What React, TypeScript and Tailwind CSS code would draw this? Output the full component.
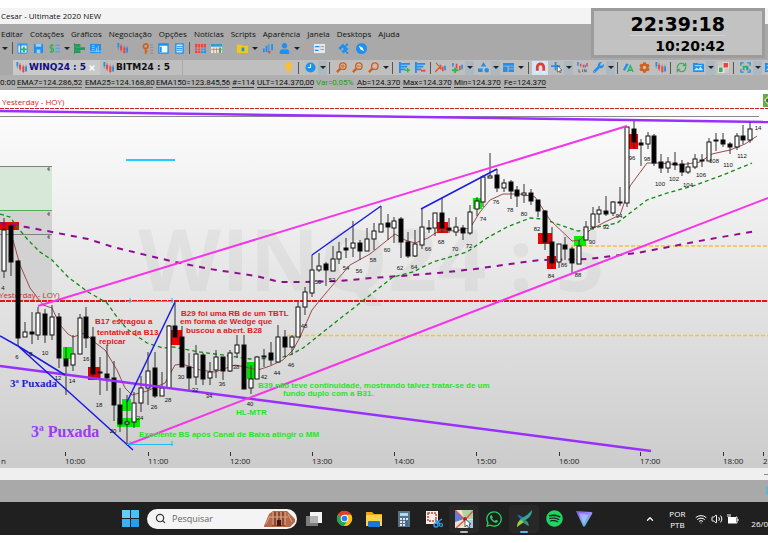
import { FC, ReactNode } from "react";
import {
  FaCog,
  FaLightbulb,
  FaPuzzlePiece,
  FaSpotify,
  FaUser,
  FaWhatsapp,
  FaWrench,
} from "react-icons/fa";
import { ChevronUp, RefreshCw, Search, Volume2, Wifi, X } from "lucide-react";

const BLUE = "#1e90f0";
const RED = "#e8473f";
const GREEN = "#2fb457";
const ORANGE = "#d2601a";

// x, high, top, bottom, low, filled
type Candle = [number, number, number, number, number, 0 | 1];

const candles: Candle[] = [
  [4, 218, 230, 271, 278, 0], [11, 224, 226, 262, 276, 1], [18, 260, 261, 338, 346, 1],
  [25, 322, 332, 337, 337, 0], [32, 312, 332, 334, 344, 1], [38, 307, 313, 335, 340, 0],
  [45, 309, 314, 335, 343, 1], [52, 305, 317, 335, 340, 0], [59, 313, 317, 358, 368, 1],
  [66, 347, 359, 366, 395, 1], [73, 335, 354, 365, 371, 0], [80, 314, 318, 354, 354, 0],
  [86, 307, 317, 338, 348, 1], [93, 327, 337, 374, 380, 1], [100, 357, 372, 373, 395, 1],
  [107, 345, 374, 378, 391, 1], [114, 361, 378, 405, 421, 1], [120, 388, 405, 424, 432, 1],
  [127, 395, 422, 424, 445, 0], [134, 392, 403, 422, 428, 0], [141, 376, 388, 403, 412, 0],
  [148, 352, 371, 388, 405, 0], [155, 352, 368, 396, 398, 1], [162, 372, 388, 396, 396, 0],
  [169, 325, 326, 388, 388, 0], [175, 303, 326, 337, 337, 1], [182, 326, 337, 367, 367, 1],
  [189, 353, 367, 378, 390, 1], [196, 345, 354, 377, 385, 0], [203, 353, 355, 379, 385, 1],
  [210, 362, 372, 378, 385, 0], [216, 350, 357, 370, 378, 0], [223, 357, 357, 371, 380, 1],
  [230, 350, 353, 371, 372, 0], [237, 335, 345, 353, 358, 0], [244, 335, 345, 389, 389, 1],
  [251, 365, 379, 388, 394, 0], [257, 356, 357, 379, 379, 0], [264, 349, 356, 357, 367, 0],
  [271, 342, 353, 360, 365, 1], [278, 325, 337, 362, 362, 0], [285, 330, 337, 347, 357, 1],
  [292, 335, 337, 347, 355, 0], [298, 302, 307, 337, 337, 0], [305, 287, 292, 307, 315, 0],
  [312, 255, 270, 293, 297, 0], [319, 253, 266, 270, 272, 0], [326, 262, 264, 270, 286, 1],
  [333, 246, 259, 271, 271, 0], [339, 242, 252, 259, 264, 0], [346, 238, 248, 250, 258, 1],
  [353, 221, 243, 248, 257, 0], [360, 240, 243, 251, 260, 1], [367, 228, 239, 251, 251, 0],
  [374, 223, 231, 239, 250, 0], [381, 206, 224, 232, 232, 0], [388, 214, 223, 227, 240, 1],
  [394, 217, 221, 228, 243, 0], [401, 217, 219, 242, 258, 1], [408, 232, 242, 256, 258, 1],
  [415, 230, 244, 256, 257, 0], [422, 209, 227, 245, 249, 0], [429, 220, 228, 229, 233, 1],
  [435, 213, 213, 228, 236, 0], [442, 198, 213, 228, 233, 1], [449, 218, 228, 230, 233, 1],
  [456, 217, 227, 232, 236, 0], [463, 225, 228, 233, 240, 1], [470, 205, 212, 233, 235, 0],
  [477, 197, 201, 209, 216, 0], [483, 175, 177, 202, 207, 0], [490, 153, 176, 178, 178, 0],
  [497, 169, 175, 188, 192, 1], [504, 179, 183, 188, 192, 0], [511, 180, 182, 191, 199, 1],
  [517, 186, 190, 196, 207, 1], [524, 184, 193, 195, 203, 0], [531, 189, 193, 201, 205, 1],
  [538, 200, 200, 211, 217, 1], [545, 210, 211, 242, 250, 1], [552, 227, 242, 263, 269, 1],
  [559, 244, 244, 262, 268, 0], [565, 237, 245, 249, 260, 1], [572, 247, 249, 263, 273, 1],
  [579, 240, 246, 264, 264, 0], [586, 221, 227, 240, 240, 0], [593, 207, 214, 227, 230, 0],
  [599, 206, 210, 214, 223, 0], [606, 196, 211, 214, 216, 1], [613, 201, 202, 213, 216, 0],
  [620, 187, 202, 203, 206, 1], [627, 127, 127, 203, 207, 0], [634, 121, 129, 142, 149, 1],
  [641, 139, 143, 145, 166, 1], [648, 132, 136, 144, 149, 0], [654, 134, 136, 163, 166, 1],
  [661, 154, 162, 168, 173, 1], [668, 157, 162, 168, 173, 0], [675, 152, 163, 165, 170, 1],
  [682, 160, 164, 172, 176, 1], [688, 162, 167, 172, 174, 0], [695, 154, 159, 167, 169, 0],
  [702, 154, 160, 161, 167, 1], [709, 138, 142, 161, 161, 0], [716, 133, 140, 141, 151, 0],
  [723, 133, 140, 144, 147, 1], [730, 142, 144, 147, 154, 1], [737, 133, 136, 147, 150, 0],
  [743, 125, 136, 140, 144, 1], [750, 122, 129, 140, 143, 0],
];

// x, y, width, height, colour
const boxes: [number, number, number, number, string][] = [
  [0, 222, 19, 8, "#f00000"],
  [63, 347, 9, 12, "#00f000"],
  [88, 367, 12, 13, "#e00000"],
  [122, 399, 9, 12, "#00f000"],
  [117, 418, 23, 9, "#00f000"],
  [171, 330, 11, 15, "#f00000"],
  [247, 362, 8, 17, "#00e000"],
  [437, 222, 11, 11, "#f00000"],
  [473, 198, 9, 11, "#00f000"],
  [538, 233, 14, 11, "#f00000"],
  [547, 256, 9, 13, "#f00000"],
  [574, 236, 12, 10, "#00f000"],
  [629, 134, 9, 15, "#f00000"],
];

// bar number, centre x, baseline y
const barNumbers: [string, number, number][] = [
  ["4", 3, 290], ["6", 17, 359], ["8", 31, 356], ["10", 45, 355], ["12", 58, 380],
  ["14", 72, 383], ["16", 86, 361], ["18", 99, 407], ["20", 113, 433], ["24", 140, 420],
  ["26", 154, 409], ["28", 168, 402], ["30", 181, 379], ["32", 195, 392], ["34", 209, 398],
  ["36", 222, 386], ["38", 236, 369], ["40", 250, 406], ["42", 264, 379], ["44", 277, 375],
  ["46", 291, 367], ["48", 304, 328], ["50", 318, 284], ["52", 332, 282], ["54", 346, 270],
  ["56", 359, 273], ["58", 373, 262], ["60", 387, 252], ["62", 400, 270], ["64", 414, 269],
  ["66", 428, 251], ["68", 441, 244], ["70", 455, 251], ["72", 469, 248], ["74", 483, 221],
  ["76", 496, 204], ["78", 510, 212], ["80", 524, 216], ["82", 537, 231], ["84", 551, 278],
  ["86", 564, 267], ["88", 578, 277], ["90", 592, 244], ["92", 606, 229], ["94", 619, 218],
  ["96", 632, 160], ["98", 647, 161], ["100", 660, 186], ["102", 674, 181],
  ["104", 688, 187], ["106", 701, 177], ["108", 714, 163], ["110", 728, 167],
  ["112", 742, 158], ["14", 758, 130],
];

const hours: [string, number][] = [
  ["10:00", 65], ["11:00", 148], ["12:00", 230], ["13:00", 312], ["14:00", 394],
  ["15:00", 476], ["16:00", 559], ["17:00", 640], ["18:00", 723],
];

const EMA7 =
  "13,240 20,265 30,288 43,305 52,308 60,325 68,334 73,337 85,333 93,341 105,350 117,370 125,388 132,395 147,391 165,383 175,365 182,364 200,370 215,372 235,365 245,367 258,370 270,366 283,360 293,350 300,337 312,310 320,300 337,280 350,265 370,254 385,242 395,234 405,240 415,243 428,238 440,230 455,231 470,228 480,212 490,200 503,194 520,194 535,197 550,220 572,241 580,240 590,230 605,222 620,215 630,186 647,163 660,163 680,165 700,162 712,154 730,150 745,144 757,136";
const EMA25 =
  "0,214 10,217 18,228 28,240 40,252 52,260 68,277 88,292 107,303 117,317 127,329 147,343 163,348 173,347 200,352 230,356 250,359 280,358 290,355 303,348 317,337 337,321 360,303 393,277 413,272 433,262 467,252 487,238 507,227 530,218 543,219 560,225 578,231 593,228 617,223 630,213 647,200 667,193 693,186 723,175 752,163";
const EMA150 =
  "0,223 26,227 52,232 88,239 113,247 150,256 175,262 210,269 256,276 280,282 303,282 340,281 372,278 400,276 438,273 475,269 510,264 540,260 588,259 637,253 663,248 710,239 757,231";

type NoteProps = { x: number; y: number; color: string; children: ReactNode };

const Note: FC<NoteProps> = ({ x, y, color, children }) => (
  <text x={x} y={y} fill={color} className="font-['Liberation_Sans',sans-serif] text-[8px] font-bold">
    {children}
  </text>
);

const Chart: FC = () => (
  <svg viewBox="0 90 768 378" className="block w-full" role="img" aria-label="WINQ24 : 5">
    <defs>
      <linearGradient id="paper" x1="0" y1="0" x2="0" y2="1">
        <stop offset="0" stopColor="#ffffff" />
        <stop offset="0.5" stopColor="#e6e6e6" />
        <stop offset="1" stopColor="#cccccc" />
      </linearGradient>
    </defs>
    <rect x="0" y="90" width="768" height="378" fill="url(#paper)" />
    <text
      x="138"
      y="291"
      fill="#000000"
      fillOpacity="0.04"
      className="font-['Open_Sans',sans-serif] text-[86px] font-bold"
    >
      WINQ24 : 5
    </text>

    {/* opening range zones */}
    <rect x="0" y="166" width="52" height="45" fill="#d8e8d8" />
    <rect x="0" y="211" width="52" height="90" fill="#d2d2d2" />
    <path d="M0 166.5H52M0 234.5H52" stroke="#808080" />
    <path d="M0 210.5H52" stroke="#4fb04f" />
    <path d="M50 168h-2v2h2M50 213h-2v2h2M50 236h-2v2h2" stroke="#555" fill="none" />

    <text x="2" y="105" fill="#d02828" className="font-['Open_Sans',sans-serif] text-[8px]">
      Yesterday - HOY)
    </text>
    <text x="-1" y="298" fill="#d02828" className="font-['Open_Sans',sans-serif] text-[8px]">
      Yesterday - LOY)
    </text>
    <path d="M0 108.5H768" stroke="#d22020" strokeDasharray="4 1" />
    <path d="M0 116.5H759" stroke="#8a8a8a" />
    <path d="M0 301H768" stroke="#ee1111" strokeWidth="2" strokeDasharray="5 1" />
    <path d="M0 111L768 122" stroke="#9a30ff" strokeWidth="2.5" />
    <path d="M126 160H175" stroke="#22ccff" strokeWidth="2" />
    <path d="M287 335.5H768M571 246H768" stroke="#f5c431" strokeWidth="1.5" strokeDasharray="4 2" />

    {boxes.map(([x, y, w, h, color]) => (
      <rect key={`${x}-${y}`} x={x} y={y} width={w} height={h} fill={color} />
    ))}
    <polyline points={EMA150} fill="none" stroke="#8e0d8e" strokeWidth="2" strokeDasharray="6 6" />
    <polyline points={EMA25} fill="none" stroke="#128a12" strokeWidth="1.3" strokeDasharray="4 3" />
    <polyline points={EMA7} fill="none" stroke="#9c4a4a" strokeWidth="1" />

    {candles.map(([x, high, top, bottom, low, filled]) => (
      <g key={x}>
        <path d={`M${x} ${high}V${low}`} stroke="#333" />
        <rect
          x={x - 2}
          y={top}
          width="4"
          height={Math.max(bottom - top, 1)}
          fill={filled ? "#000" : "#fff"}
          stroke="#111"
        />
      </g>
    ))}

    <path d="M0 366L651 451" stroke="#9a30ff" strokeWidth="2.5" />
    <path d="M38 306L627 126M127 445L768 198" stroke="#f535e8" strokeWidth="2" />
    <path
      d="M0 336L18 346L65 375M18 346L133 450M127 402L175 302M312 255L381 206M421 209L497 169"
      stroke="#1c1ce0"
      strokeWidth="1.5"
      fill="none"
    />
    <path
      d="M127 301.5H173M130 298V303M172 298V303M127 444.5H173M130 441V446M172 441V446"
      stroke="#22bbee"
      fill="none"
    />

    {barNumbers.map(([label, x, y]) => (
      <text
        key={`${label}-${x}`}
        x={x}
        y={y}
        textAnchor="middle"
        fill="#111"
        className="font-['Liberation_Sans',sans-serif] text-[6px]"
      >
        {label}
      </text>
    ))}

    <Note x={95} y={324} color="#e81414">B17 estragou a</Note>
    <Note x={97} y={335} color="#e81414">tentativa da B13,</Note>
    <Note x={99} y={344} color="#e81414">repicar</Note>
    <Note x={181} y={316} color="#e02020">B29 foi uma RB de um TBTL</Note>
    <Note x={180} y={324} color="#e02020">em forma de Wedge que</Note>
    <Note x={186} y={333} color="#e02020">buscou a abert. B28</Note>
    <Note x={258} y={388} color="#1fe61f">
      B39 não teve continuidade, mostrando talvez tratar-se de um
    </Note>
    <Note x={283} y={396} color="#1fe61f">fundo duplo com a B31.</Note>
    <Note x={236} y={415} color="#1fe61f">HL-MTR</Note>
    <Note x={139} y={437} color="#1fe61f">Excelente BS após Canal de Baixa atingir o MM</Note>
    <text x="10" y="387" fill="#1c1cd0" className="font-['Liberation_Serif',serif] text-[11px] font-bold">
      3ª Puxada
    </text>
    <text x="31" y="437" fill="#9a3cf0" className="font-['Liberation_Serif',serif] text-[16px] font-bold">
      3ª Puxada
    </text>

    <g className="font-['Open_Sans',sans-serif] text-[8px]" fill="#222">
      <text x="1" y="464">n</text>
      {hours.map(([label, x]) => (
        <g key={label}>
          <path d={`M${x}.5 452V456`} stroke="#333" />
          <text x={x} y="464">{label}</text>
        </g>
      ))}
      <path d="M763.5 452V456" stroke="#333" />
      <text x="763" y="464">2</text>
    </g>
    <rect x="763" y="94" width="5" height="13" fill="#5fae52" />
    <path d="M764 100L768 96V105Z" fill="#ecd94a" />
    <circle cx="768" cy="100.5" r="2" fill="#2c55b8" />
  </svg>
);

type IconProps = { name: string };

const Magnifier: FC<{ mark?: string }> = ({ mark = "" }) => (
  <g fill="none" stroke={ORANGE} strokeWidth="1.5">
    <circle cx="7.5" cy="4.5" r="3.5" />
    <path d="M5 7L1 11" strokeWidth="2.5" />
    <path d={`M0 0${mark}`} strokeWidth="1" />
  </g>
);

const MiniCandles: FC = () => (
  <g>
    <path d="M1.5 0v5M11 5v5" stroke={BLUE} strokeWidth="2" />
    <path d="M4.5 3v5M8 5v6" stroke={RED} strokeWidth="2.2" />
    <path d="M1.5 5v2M11 3v8" stroke={BLUE} strokeWidth="0.7" />
    <path d="M4.5 1v9M8 3v9" stroke={RED} strokeWidth="0.7" />
  </g>
);

const drawings: Record<string, ReactNode> = {
  novo: (
    <g>
      <path d="M1 1h10v10H1z" fill="#dceefb" stroke={BLUE} />
      <path d="M1 2h10M4 1v10" stroke={BLUE} strokeWidth="1.5" />
      <path d="M7.5 4v6M4.5 7h6" stroke={GREEN} strokeWidth="2" />
    </g>
  ),
  salvar: (
    <g>
      <path d="M1 1h10v10H1z" fill={BLUE} />
      <path d="M3 1h6v3H3zM4 7h4v4H4z" fill="#9fd0f5" />
    </g>
  ),
  ordens: (
    <g fill="none">
      <path d="M5 2.5H2.5Q1 2.5 1 4T2.5 6H4Q5 6 5 8T3.5 9.5H1M3 1v10" stroke={GREEN} strokeWidth="1.3" />
      <path d="M7 2.5h5M7 6h5M7 9.5h5" stroke="#5aa6d8" strokeWidth="1.5" />
    </g>
  ),
  book: <path d="M0 0v12h1V0zM1 1h6v3H1zM1 4.5h11v3H1zM1 8h6v3H1z" fill="#1f9a58" />,
  grade: (
    <g>
      <path d="M0 1h12v10H0z" fill={BLUE} />
      <path d="M2 3h3M2 5h3M2 7h3M7 5v5M9 3v7M0 9h12" stroke="#b8dcf8" strokeWidth="0.8" />
    </g>
  ),
  candles: <MiniCandles />,
  chave: (
    <g fill="none">
      <circle cx="4" cy="3.5" r="2.5" stroke={ORANGE} strokeWidth="1.8" />
      <path d="M4 6v6M4 9h2" stroke={ORANGE} strokeWidth="1.8" />
      <path d="M9 2h3M9 5h3M9 8h3M9 11h3" stroke="#8a8a8a" />
    </g>
  ),
  janela: (
    <g>
      <path d="M1 1h10v10H1z" fill="#f2f8fd" stroke={BLUE} strokeWidth="1.5" />
      <path d="M1 2h10M3 4v6" stroke={BLUE} strokeWidth="2" />
    </g>
  ),
  lista: (
    <g>
      <path d="M2 1h8v10H2z" fill="#cfe6f9" stroke={BLUE} strokeWidth="1.5" />
      <path d="M3 4h6M3 6h6M3 8h6" stroke={BLUE} />
    </g>
  ),
  calor: (
    <g>
      <path d="M0 1h12v4H0z" fill={RED} />
      <path d="M0 6h7v5H0z" fill={RED} />
      <path d="M7 6h5v5H7z" fill={BLUE} />
      <path d="M3 1v10M6 1v10M9 1v10M0 8h12" stroke="#d9c2c2" strokeWidth="0.5" />
    </g>
  ),
  calendario: (
    <g>
      <path d="M0 1h12v10H0z" fill="#e6e6e6" />
      <path d="M0 1h12v3H0z" fill="#2b9fd0" />
      <path d="M3 5v6M6 5v6M9 5v6M0 7h12" stroke="#d07060" strokeWidth="0.8" />
      <path d="M9 5h2v6H9z" fill={GREEN} />
    </g>
  ),
  pasta: (
    <g>
      <path d="M0 2h5l1 1h6v8H0z" fill="#f8c51c" />
      <path d="M5 5h3v4H5z" fill={BLUE} />
    </g>
  ),
  barras: (
    <g>
      <path d="M1 6h2v4H1zM4 3h2v7H4zM7 1h1v9H7zM10 1h2v7h-2z" fill={BLUE} />
      <path d="M6 9h4l-2 3z" fill={RED} />
    </g>
  ),
  cartao: (
    <g>
      <path d="M0 1h12v10H0z" fill="#e8e8e8" />
      <path d="M1 4h5M1 8h4" stroke={BLUE} strokeWidth="1.5" />
      <path d="M7 4h4M7 7h4" stroke="#999" />
    </g>
  ),
  relogio: (
    <g>
      <circle cx="6" cy="6" r="5.5" fill={BLUE} />
      <path d="M6 2.5V6H3" stroke="#fff" strokeWidth="1.2" fill="none" />
    </g>
  ),
  bussola: (
    <g>
      <circle cx="6" cy="6" r="6" fill={BLUE} />
      <path d="M3 3l4 2 2 4-4-2z" fill="#fff" />
    </g>
  ),
  zoomMais: <Magnifier mark="M5.5 4.5h4M7.5 2.5v4" />,
  zoomMenos: <Magnifier mark="M5.5 4.5h4" />,
  zoom: <Magnifier />,
  listaMais: (
    <g>
      <path d="M1 0v12M2 2h10M2 5h7M2 8h5" stroke={BLUE} strokeWidth="2" />
      <path d="M9.5 6.5v5M7 9h5" stroke={GREEN} strokeWidth="1.5" />
    </g>
  ),
  listaMenos: (
    <g>
      <path d="M1 0v12M2 2h9M2 5h7M2 8h5" stroke={BLUE} strokeWidth="2" />
      <path d="M6.5 9.5h5" stroke={RED} strokeWidth="2" />
    </g>
  ),
  tendencia: (
    <g fill="none">
      <path d="M0 11L5 6l2 2" stroke={ORANGE} strokeWidth="1.5" />
      <path d="M1 1l4 4" stroke={ORANGE} strokeWidth="1.2" />
      <path d="M6 3v5M8.500 5v5" stroke={RED} strokeWidth="1.8" />
      <path d="M11 4v5" stroke={BLUE} strokeWidth="1.8" />
    </g>
  ),
  tendenciaMais: (
    <g fill="none">
      <path d="M1 1v4" stroke={BLUE} strokeWidth="1.8" />
      <path d="M5 2v5M8.500 4v5" stroke={RED} strokeWidth="1.8" />
      <path d="M11 3v5" stroke={BLUE} strokeWidth="1.8" />
      <path d="M0 9h7M3.5 6v6" stroke={GREEN} strokeWidth="2" />
    </g>
  ),
  formas: <path d="M6 0l3 5H3zM0 7h5v4H0zM7 9a2.5 2.5 0 1 1 5 0a2.5 2.5 0 1 1-5 0z" fill={BLUE} />,
  layout: <path d="M0 1h12v3H0zM0 5h5v6H0zM6 5h6v2H6zM6 8h6v3H6z" fill={BLUE} />,
  ima: (
    <g fill="none">
      <path d="M2.5 10V5.5a3.5 3.5 0 0 1 7 0V10" stroke="#e53a30" strokeWidth="3" />
      <path d="M1 10.5h3M8 10.5h3" stroke="#f3f3f3" strokeWidth="2" />
    </g>
  ),
  cursor: (
    <g>
      <path d="M5 0v9M0 4.5h10" stroke={BLUE} strokeWidth="2" />
      <path d="M7 4v7l2-1.5 1 2.5 1-1-1-2h2z" fill="#fff" stroke="#222" strokeWidth="0.6" />
    </g>
  ),
  lin: (
    <g>
      <path d="M4 2v3M7 3v3M11 1v4" stroke={RED} strokeWidth="1.6" />
      <path d="M1 0v4M9 3v3" stroke={BLUE} strokeWidth="1.6" />
      <path d="M2 8v3h2M6 8v3M8 11V8l2 3V8" stroke="#555" strokeWidth="0.8" fill="none" />
    </g>
  ),
  texto: (
    <g fill="none">
      <path d="M1 9L5 2" stroke={BLUE} strokeWidth="2.5" />
      <path d="M5 11L8 4l3 7M6 9h4" stroke={GREEN} strokeWidth="1.5" />
    </g>
  ),
  imagem: (
    <g>
      <path d="M0 1h5l1 1h6v9H0z" fill={BLUE} />
      <path d="M1 9l3-3 2 2 2-3 3 4z" fill="#cfe8fb" />
      <path d="M2 4h8" stroke="#cfe8fb" />
    </g>
  ),
  quadro: (
    <g>
      <path d="M0 0h12v12H0z" fill="#f3dede" />
      <path d="M6 1h5v5H6z" fill={RED} />
      <path d="M1 6h4v5H1z" fill={GREEN} />
      <path d="M0 0h5v5H0zM7 7h5v5H7z" fill="#c8c8c8" />
    </g>
  ),
  foco: (
    <g fill="none" strokeWidth="1.5">
      <path d="M1 4V1h3M8 1h3v3M11 8v3H8M4 11H1V8" stroke={BLUE} />
      <path d="M4 9V5h4v4" stroke={GREEN} strokeWidth="2" />
      <path d="M8 5v4" stroke={BLUE} strokeWidth="2" />
    </g>
  ),
};

const Icon: FC<IconProps> = ({ name }) => {
  switch (name) {
    case "usuario":
      return <FaUser size={11} color={BLUE} />;
    case "modulos":
      return <FaPuzzlePiece size={11} color={BLUE} className="rotate-45" />;
    case "dica":
      return <FaLightbulb size={11} color="#fbc02d" />;
    case "ferramentas":
      return <FaWrench size={11} color={BLUE} />;
    case "configurar":
      return <FaCog size={11} color={ORANGE} />;
    case "atualizar":
      return <RefreshCw size={11} strokeWidth={3} color="#3fae5a" />;
  }
  return (
    <svg viewBox="0 0 12 12" className="h-[11px] w-[11px]">
      {drawings[name]}
    </svg>
  );
};

// "v" is a drop-down arrow ("V" a tinted one), "|" a divider, a number an empty gap
type ToolItem = string | number;

const Toolbar: FC<{ label: string; items: ToolItem[] }> = ({ label, items }) => (
  <div className="flex h-4 shrink-0 items-center" role="toolbar" aria-label={label}>
    {items.map((item, i) => {
      if (typeof item === "number") {
        return <span key={i} className="shrink-0" style={{ width: item }} />;
      }
      if (item === "|") {
        return (
          <span key={i} className="flex w-1 shrink-0 justify-center">
            <span className="h-3 w-px bg-[#555]" />
          </span>
        );
      }
      if (item === "v" || item === "V") {
        return (
          <button
            key={i}
            type="button"
            aria-label="Mais"
            className={`flex h-[14px] w-[9px] shrink-0 items-center justify-center ${
              item === "V" ? "bg-[#adb9c1]" : ""
            }`}
          >
            <span className="border-x-[3px] border-t-[3px] border-x-transparent border-t-[#222]" />
          </button>
        );
      }
      return (
        <button
          key={i}
          type="button"
          aria-label={item}
          className={`flex h-[14px] w-4 shrink-0 items-center justify-center ${
            item === "ima" ? "bg-[#d3e6f5]" : ""
          }`}
        >
          <Icon name={item} />
        </button>
      );
    })}
  </div>
);

const mainTools: ToolItem[] = [
  "v", 1, "|", "novo", "salvar", "ordens", "v", "book", "grade", 11, "candles", 9, "chave",
  "janela", "lista", "|", 1, "calor", "calendario", 10, "pasta", "v", "barras", 1, "usuario",
  "v", 10, "cartao", 10, "modulos", "bussola",
];

const chartTools: ToolItem[] = [
  "dica", "|", 2, "relogio", "V", "|", 2, "zoomMais", "zoomMenos", "zoom", "v", "|", 2,
  "listaMais", "listaMenos", "|", "tendencia", 1, "tendenciaMais", "V", 1, "formas", "V",
  "layout", "v", 1, "|", 2, "ima", "cursor", "V", 1, "lin", "ferramentas", "V", "|", 1,
  "texto", "configurar", "candles", "|", 1, "atualizar", 1, "imagem", "V", "quadro", "|", 2,
  "foco", "V", "imagem",
];

const menus = [
  "Editar", "Cotações", "Gráficos", "Negociação", "Opções", "Notícias", "Scripts",
  "Aparência", "Janela", "Desktops", "Ajuda",
];

const quotes = [
  { text: "0:00", style: "w-[14px] border-transparent" },
  { text: "EMA7=124.286,52", style: "w-[65px] border-[#b04040]" },
  { text: "EMA25=124.168,80", style: "w-[68px] border-[#208020]" },
  { text: "EMA150=123.845,56", style: "w-[73px] border-[#a020a0]" },
  { text: "#=114", style: "w-[22px] border-[#333]" },
  { text: "ULT=124.370,00", style: "w-14 border-[#333]" },
  { text: "Var=0,05%", style: "w-[38px] border-transparent text-[#20a020]" },
  { text: "Ab=124.370", style: "w-[43px] border-[#333]" },
  { text: "Max=124.370", style: "w-12 border-[#333]" },
  { text: "Min=124.370", style: "w-[47px] border-[#333]" },
  { text: "Fe=124.370", style: "w-[42px] border-[#333]" },
];

const Clock: FC = () => (
  <div className="absolute top-2 right-[3px] flex h-[50px] w-[174px] flex-col items-end border-[3px] border-[#9c9c9c] bg-[#c2c2c2] pr-[37px] font-['DejaVu_Sans',sans-serif] font-bold text-black">
    <div className="mt-0.5 border-b border-[#d2d2d2] text-[19px] leading-[22px]">22:39:18</div>
    <div className="text-[14px] leading-[20px]">10:20:42</div>
  </div>
);

const taskbarApps: { name: string; active?: string; icon: ReactNode }[] = [
  {
    name: "Visão de tarefas",
    icon: (
      <svg viewBox="0 0 18 18" className="h-[18px] w-[18px]">
        <path d="M1 6h12v10H1z" fill="#7c7c7c" />
        <path d="M5 2h12v11H5z" fill="#f4f4f4" />
        <path d="M5 6h8v7H5z" fill="#b2b2b2" />
      </svg>
    ),
  },
  {
    name: "Chrome",
    icon: (
      <svg viewBox="0 0 18 18" className="h-[17px] w-[17px]">
        <circle cx="9" cy="9" r="8" fill="#fbc116" />
        <path d="M9 9L2 5A8 8 0 0 1 16 5z" fill="#e33b2e" />
        <path d="M9 9L2 5A8 8 0 0 0 8.5 17L13 10z" fill="#23a455" />
        <path d="M9 5h7A8 8 0 0 1 8.5 17L13 10z" fill="#fbc116" />
        <circle cx="9" cy="9" r="4" fill="#fff" />
        <circle cx="9" cy="9" r="3" fill="#2d7cf0" />
      </svg>
    ),
  },
  {
    name: "Explorador",
    icon: (
      <svg viewBox="0 0 18 18" className="h-[18px] w-[18px]">
        <path d="M1 2h6l2 2h8v12H1z" fill="#e9a818" />
        <path d="M1 5h16v11H1z" fill="#fcd24f" />
        <path d="M3 12q0-1 1-1h10q1 0 1 1v5H3z" fill="#1f78cf" />
      </svg>
    ),
  },
  {
    name: "Calculadora",
    icon: (
      <svg viewBox="0 0 18 18" className="h-[18px] w-[18px]">
        <path d="M3 1h12v16H3z" fill="#5b7284" />
        <path d="M5 3h8v3H5z" fill="#a9dcf8" />
        <path d="M5 8h2v2H5zM8 8h2v2H8zM11 8h2v2h-2zM5 11h2v2H5zM8 11h2v2H8zM5 14h2v2H5zM8 14h2v2H8z" fill="#dce6ec" />
        <path d="M11 11h2v5h-2z" fill="#2c6fb8" />
      </svg>
    ),
  },
  {
    name: "Captura",
    icon: (
      <svg viewBox="0 0 18 18" className="h-[18px] w-[18px]">
        <path d="M1 1h12v13H1z" fill="#f3f0ee" />
        <path d="M3 3h8v8H3z" fill="none" stroke="#d5452e" strokeWidth="1.5" strokeDasharray="2 1" />
        <path d="M10 9l5 5M17 9l-6 4" stroke="#3a9fe0" strokeWidth="1.5" />
        <circle cx="11" cy="15" r="2" fill="none" stroke="#3a9fe0" strokeWidth="1.5" />
        <circle cx="16" cy="15" r="1.5" fill="none" stroke="#3a9fe0" strokeWidth="1.2" />
      </svg>
    ),
  },
  {
    name: "Gravador",
    active: "bg-[#b8b8b8]",
    icon: (
      <svg viewBox="0 0 18 18" className="h-[18px] w-[18px]">
        <path d="M0 0h18v18H0z" fill="#ece6d0" />
        <path d="M0 0v12L9 9z" fill="#5d7edb" />
        <path d="M7 0h11v9H9z" fill="#a9d7a0" />
        <path d="M10 10h8v8h-6z" fill="#a8c9e8" />
        <path d="M0 0L10 10L18 1M10 10L1 18" fill="none" stroke="#e05858" strokeWidth="1.5" />
        <circle cx="10" cy="9" r="2" fill="#d81e1e" />
        <path d="M10 9v8l2-2 2 3 1-1-1-3h2z" fill="#fff" stroke="#222" strokeWidth="0.7" />
      </svg>
    ),
  },
  { name: "WhatsApp", icon: <FaWhatsapp size={18} color="#28cf62" /> },
  {
    name: "Profit",
    active: "bg-[#5ab4f0]",
    icon: (
      <svg viewBox="0 0 18 18" className="h-[18px] w-[18px]">
        <path d="M2 5q5 0 7 4l3 6q-4-1-6-5z" fill="#2868a8" />
        <path d="M17 0q0 6-5 9l-6 4-4 4q0-6 5-9 6-3 10-8z" fill="#2aa898" />
        <path d="M2 17q0-5 4-7l3 2z" fill="#a9c832" />
        <path d="M9 10q4 0 5 6-4-1-5-6z" fill="#3f9a6c" />
      </svg>
    ),
  },
  { name: "Spotify", icon: <FaSpotify size={17} color="#1ed760" /> },
  {
    name: "Proton VPN",
    icon: (
      <svg viewBox="0 0 18 18" className="h-[18px] w-[18px]">
        <defs>
          <linearGradient id="vpn" x1="0" y1="0" x2="0.6" y2="1">
            <stop offset="0" stopColor="#7a56f0" />
            <stop offset="0.5" stopColor="#9c90f8" />
            <stop offset="1" stopColor="#48c8d8" />
          </linearGradient>
        </defs>
        <path d="M1 1l15 1q2 0 1 2l-7 12q-1 1-2 0z" fill="url(#vpn)" />
        <path d="M4 3l9 2-4 9z" fill="#b4dcff" fillOpacity="0.5" />
      </svg>
    ),
  },
];

const Taskbar: FC = () => (
  <footer className="flex h-[33px] items-center overflow-hidden bg-[#202020] pl-[122px] font-['Open_Sans',sans-serif] text-white">
    <button type="button" aria-label="Iniciar" className="mr-2 grid h-[17px] w-[17px] shrink-0 grid-cols-2 gap-px">
      <span className="bg-[#5fd0fa]" />
      <span className="bg-[#48c0f8]" />
      <span className="bg-[#38b4f4]" />
      <span className="bg-[#1fa0f0]" />
    </button>
    <label className="mr-0.5 flex h-5 w-[150px] shrink-0 items-center overflow-hidden rounded-full bg-[#f4f4f4] pl-2">
      <Search size={11} strokeWidth={2.5} color="#333" className="shrink-0" />
      <input
        type="text"
        aria-label="Pesquisar"
        placeholder="Pesquisar"
        className="ml-1.5 w-[92px] bg-transparent text-[9px] text-black outline-none placeholder:text-[#666]"
      />
      <svg viewBox="0 0 32 18" className="h-[18px] w-8 shrink-0">
        <path d="M0 16L5 4L9 1H23L31 9V12L26 17H0z" fill="#b46a48" />
        <path d="M8 2h13v14H8z" fill="#8a4a32" />
        <path d="M9 2v13M13 2v13M17 2v13M21 2v13" stroke="#d99a78" strokeWidth="1.5" />
        <path d="M13 10h4v6h-4z" fill="#3a1c14" />
        <path d="M2 14l4-8M24 4l4 8M6 7h18" stroke="#dba486" />
      </svg>
    </label>
    {taskbarApps.map((app) => (
      <button
        key={app.name}
        type="button"
        aria-label={app.name}
        className={`relative flex h-7 w-[30px] shrink-0 items-center justify-center rounded ${
          app.active ? "bg-[#282828]" : ""
        }`}
      >
        {app.icon}
        {app.active && (
          <span className={`absolute bottom-0 left-[11px] h-0.5 w-2 rounded ${app.active}`} />
        )}
      </button>
    ))}
    <div className="ml-auto flex shrink-0 items-center">
      <ChevronUp size={10} strokeWidth={3} />
      <div className="mr-2.5 ml-3.5 text-center text-[8px] leading-[11px]">
        <div>POR</div>
        <div>PTB</div>
      </div>
      <Wifi size={12} className="mr-1" />
      <Volume2 size={12} className="mr-1" />
      <svg viewBox="0 0 12 12" className="mr-3 h-3 w-3">
        <path d="M1 4h8v6H1z" fill="#fff" />
        <path d="M1 1v3M3 1v3M9 4h1v6H1" stroke="#fff" fill="none" />
        <path d="M11 6v2" stroke="#fff" />
      </svg>
      <div className="pt-2.5 text-[8px] leading-[11px]">26/0</div>
    </div>
  </footer>
);

const App: FC = () => {
  return (
    <div className="relative overflow-hidden bg-white py-2 font-['Open_Sans',sans-serif] text-[8px] text-[#111]">
      <header className="h-4 bg-[#f3f3f3] pl-px leading-4">
        <h1>Cesar - Ultimate 2020 NEW</h1>
      </header>
      <div className="h-9 bg-[#a9a9a9]">
        <nav className="flex h-4 items-end gap-[7px] pl-px leading-3" aria-label="Menu">
          {menus.map((menu) => (
            <button key={menu} type="button">
              {menu}
            </button>
          ))}
        </nav>
        <Toolbar label="Principal" items={mainTools} />
      </div>
      <div className="flex h-[15px] items-center bg-[#bfbfbf]">
        <div
          className="flex h-full w-[280px] shrink-0 items-center bg-[#bfbfbf] font-['DejaVu_Sans',sans-serif] text-[9px] font-bold"
          role="tablist"
        >
          <span className="h-full w-[13px] bg-[#a9a9a9]" />
          <button type="button" role="tab" className="flex h-full w-[87px] items-center gap-0.5 bg-[#c9c9c9] pl-[3px] text-[#101080]">
            <Icon name="candles" />
            WINQ24 : 5
            <X size={8} strokeWidth={4} color="#fff" />
          </button>
          <button type="button" role="tab" className="flex h-full w-[83px] items-center gap-0.5 border-r border-[#aaa] pl-[3px]">
            <Icon name="candles" />
            BITM24 : 5
          </button>
        </div>
        <Toolbar label="Gráfico" items={chartTools} />
      </div>
      <div className="flex h-[15px] items-center gap-[3px] bg-[#b0b0b0] font-[Roboto,sans-serif] leading-[9px] whitespace-nowrap">
        {quotes.map((quote) => (
          <span key={quote.text} className={`shrink-0 border-b ${quote.style}`}>
            {quote.text}
          </span>
        ))}
      </div>
      <Chart />
      <div className="flex h-3 items-center justify-end bg-[#efefef]">
        <span className="h-px w-1 bg-[#888]" />
      </div>
      <div className="flex h-[22px] items-center justify-end bg-[#a9a9a9]">
        <span className="h-2 w-0.5 bg-[#5ab8dc]" />
      </div>
      <Taskbar />
      <Clock />
    </div>
  );
};

export default App;
